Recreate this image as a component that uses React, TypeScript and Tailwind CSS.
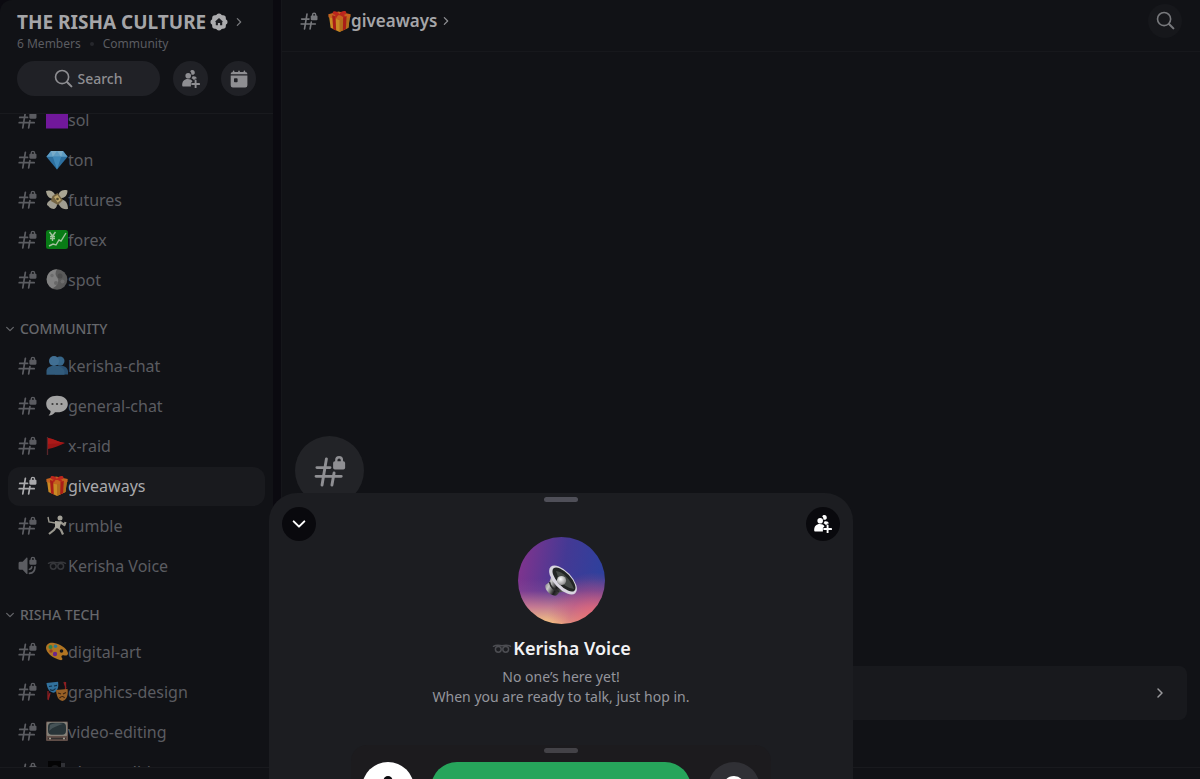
import React from "react";

type IconProps = { className?: string };

function HashLock({ className }: IconProps) {
  return (
    <svg viewBox="0 0 32 33" className={className} fill="none" stroke="currentColor" strokeWidth="3" strokeLinecap="round" aria-hidden="true">
      <path d="M12.300 4 7.800 31M20.200 18.500 18 31M2.500 13h13.500M1.600 22h26" />
      <path d="M22.500 8V5.200a2.900 2.900 0 0 1 5.800 0V8" strokeWidth="2.400" />
      <rect x="19.200" y="6.400" width="12.400" height="8.600" rx="1.800" fill="currentColor" stroke="none" />
    </svg>
  );
}

function SpeakerLock({ className }: IconProps) {
  return (
    <svg viewBox="0 0 32 33" className={className} fill="none" stroke="currentColor" strokeLinecap="round" aria-hidden="true">
      <path d="M16 3.500v27c0 .8-.9 1.200-1.500.7L7.500 24H3A2.500 2.500 0 0 1 .5 21.500v-9A2.500 2.500 0 0 1 3 10h4.500l7-7.200c.6-.5 1.500-.1 1.500.7Z" fill="currentColor" stroke="none" />
      <path d="M19.500 23c2 0 3.500-1.500 3.800-4M19.500 30c5.500-.2 9.300-4.500 9.500-11" strokeWidth="3" />
      <path d="M22.500 8V5.200a2.900 2.900 0 0 1 5.800 0V8" strokeWidth="2.400" />
      <rect x="19.200" y="6.400" width="12.400" height="8.600" rx="1.800" fill="currentColor" stroke="none" />
    </svg>
  );
}

function PeoplePlus({ className }: IconProps) {
  return (
    <svg viewBox="0 0 18 18" className={className} fill="currentColor" aria-hidden="true">
      <circle cx="6.200" cy="5.700" r="2.800" />
      <path d="M0.200 15.500C0 11.300 2.300 9 5.800 9c2 0 3.700.8 4.700 2.200L8.900 13v3.400H1c-.5 0-.8-.4-.8-.9Z" />
      <path d="M8.200 1.400C8.700.5 9.500.1 10.400.1a2.400 2.400 0 0 1 1 4.600c-.7.3-1.500.2-2-.2.1-1.300-.3-2.400-1.200-3.100Z" />
      <path d="M9.500 8.300c.5-.6.800-1.200.9-1.900 2.200-.6 4.100.2 4.400 2.200l-1.600.1-1.100 1.600c-.6-.9-1.500-1.600-2.600-2Z" />
      <path d="M13.600 10.500v7M10.100 14h7" stroke="currentColor" strokeWidth="1.900" strokeLinecap="round" />
    </svg>
  );
}

function CalendarIcon({ className }: IconProps) {
  return (
    <svg viewBox="0 0 18 18" className={className} fill="currentColor" aria-hidden="true">
      <path d="M.7 4.200C.7 2.700 1.700 2 2.800 2V1.200a.8.800 0 0 1 1.600 0V2h3.800V1.200a.8.800 0 0 1 1.600 0V2h3.800V1.200a.8.800 0 0 1 1.600 0V2c1.200 0 2.200.7 2.200 2.200Z" />
      <path fillRule="evenodd" d="M.7 5.600h16.700v9.600a2.200 2.200 0 0 1-2.200 2.200H2.900a2.200 2.200 0 0 1-2.200-2.200ZM4 9v2.500c0 .4.300.7.700.7h2.200c.4 0 .7-.3.700-.7V9c0-.4-.3-.7-.7-.7H4.700c-.4 0-.7.300-.7.700Z" />
    </svg>
  );
}

function SearchIcon({ className }: IconProps) {
  return (
    <svg viewBox="0 0 20 20" className={className} fill="none" stroke="currentColor" strokeLinecap="round" aria-hidden="true">
      <circle cx="8.500" cy="8.500" r="6.900" strokeWidth="1.700" />
      <path d="m13.700 13.700 4.600 4.600" strokeWidth="2.200" />
    </svg>
  );
}

function Chevron({ className }: IconProps) {
  return (
    <svg viewBox="0 0 12 12" className={className} fill="none" stroke="currentColor" strokeWidth="1.500" strokeLinecap="round" strokeLinejoin="round" aria-hidden="true">
      <path d="m4 2 4 4-4 4" />
    </svg>
  );
}

function CommunityBadge({ className }: IconProps) {
  return (
    <svg viewBox="0 0 18 18" className={className} aria-hidden="true">
      <g fill="#acacae">
        <circle cx="9" cy="9" r="7.400" />
        <circle cx="9" cy="3.200" r="2.700" />
        <circle cx="13.100" cy="4.900" r="2.700" />
        <circle cx="14.800" cy="9" r="2.700" />
        <circle cx="13.100" cy="13.100" r="2.700" />
        <circle cx="9" cy="14.800" r="2.700" />
        <circle cx="4.900" cy="13.100" r="2.700" />
        <circle cx="3.200" cy="9" r="2.700" />
        <circle cx="4.900" cy="4.900" r="2.700" />
      </g>
      <path d="m9 4.900 4.100 3.900h-.9v3.500h-2.100V9.900H7.900v2.400H5.800V8.800h-.9Z" fill="#1c1d21" />
    </svg>
  );
}

const emojiArt: Record<string, React.ReactNode> = {
  purple: <rect x="0" y="1.500" width="22" height="18" fill="#71189b" />,
  gem: (
    <>
      <path d="M5 2h12l4.600 5.800L11 20.500.4 7.800Z" fill="#2d6f9f" />
      <path d="M5 2h12l4.600 5.800H.4Z" fill="#5d9cc4" />
      <path d="m6.800 7.800 4.200 12.700 4.200-12.700Z" fill="#3f88b9" />
      <path d="m5 2 1.800 5.800L11 2l4.200 5.800L17 2Z" fill="#78abc9" />
    </>
  ),
  money: (
    <>
      <path d="M0 2c5-2 9 1 10 7C4 11 1 8 0 2ZM12 9c0-6 4-9 9.500-7.500C21.500 7 18 10 12 9Z" fill="#a8a493" />
      <path d="M10 11c-5-1-9 1-9 5 2 1 3 4 7 4 3-1 4-5 2-9ZM12 11c6-2 10 2 10 9-6 1-10-3-10-9Z" fill="#a09d91" />
      <path d="m6.500 7 5-3 5.500 7-5 5-7-4Z" fill="#746442" />
      <path d="m8 8 3.500-2 3.500 5-3.500 2.500Z" fill="#bda66c" />
      <circle cx="11.500" cy="10" r="1.300" fill="#54492d" />
    </>
  ),
  forex: (
    <>
      <rect x="0" y="1" width="22" height="19" rx="2.500" fill="#087b16" />
      <path d="m3.500 3 3 4 3-4M6.500 7v5M4 7.500h5M4 9.500h5M3 17l4-2 3 1 3-5 2 1 5-8" fill="none" stroke="#a4c3a0" strokeWidth="1.400" />
    </>
  ),
  moon: (
    <>
      <circle cx="11" cy="10.500" r="10.300" fill="#5a5a5a" />
      <path d="M11 .2a10.300 10.300 0 0 0-5 19.300c4-1 8-7 5.500-10.500C9 6 9 3 11 .2Z" fill="#818181" />
      <circle cx="14" cy="7" r="2.500" fill="#4c4c4c" />
      <circle cx="10" cy="14" r="2" fill="#686868" />
      <circle cx="16.500" cy="12.500" r="2" fill="#6c6c6c" />
      <circle cx="6" cy="6.500" r="1.700" fill="#6d6d6d" />
    </>
  ),
  people: (
    <>
      <path d="M8 14c0-5 13-5 14 2v3.500H9Z" fill="#2a5173" />
      <circle cx="14" cy="6" r="4.500" fill="#376689" />
      <circle cx="8" cy="6" r="5" fill="#416f93" />
      <path d="M.5 19.800v-4C.5 9 16 9 18.500 16v3.800Z" fill="#315b7c" />
    </>
  ),
  speech: (
    <>
      <path d="M11 .8C4.500.8.2 4 .2 9c0 3.300 1.800 5.700 4.400 6.900.1 2-.8 3.300-2 4.500 3 .2 5-1.200 6.400-3.200 8 .8 12.800-3 12.800-8.200C21.800 4 17.500.8 11 .8Z" fill="#a3a3a3" />
      <g fill="#393939"><circle cx="6.500" cy="9" r="1.100" /><circle cx="11" cy="9" r="1.100" /><circle cx="15.500" cy="9" r="1.100" /></g>
    </>
  ),
  flag: (
    <>
      <path d="M1.500 2v18" stroke="#58252a" strokeWidth="1.300" />
      <path d="M2 3c6 1 10 4 17 5-5 2-11 5-17 6Z" fill="#9b1515" />
      <path d="M2 3c6 1 10 4 17 5L2 9Z" fill="#ab1a19" />
    </>
  ),
  gift: (
    <>
      <path d="m1 6 10 3 10-3-1.500 11-8.500 4-8.500-4Z" fill="#c98a24" />
      <path d="m11 8 10-3-1.500 12-8.500 4Z" fill="#b06c1c" />
      <path d="m.3 4 9.700-2.500 11.700 2.500-.2 3L11 9.500.5 7Z" fill="#c4641f" />
      <path d="m4 5 3.200 1 .6 13.500L5 18.300ZM14.500 7l3.300-1.200-.7 12.400-2.900 1.300Z" fill="#a91d18" />
      <path d="M11 5C8 5 4 4.500 4.500 2.300S9.500 1 11 4c1-3 6-4 6.500-1.700S14 5 11 5Z" fill="#bd261d" />
      <path d="m9 4-2 3M12 4l4 2.500" stroke="#b8261d" strokeWidth="2" />
    </>
  ),
  fencer: (
    <>
      <circle cx="14" cy="3" r="2.500" fill="#a2a097" />
      <path d="m2 2 1 5 6 1 2-1" fill="none" stroke="#99978e" strokeWidth="1.400" />
      <path d="m10 12-2 3-5 4M11 11l4 4 2 4.500M14 7l4.500 3 1-3" fill="none" stroke="#99978e" strokeWidth="2.200" strokeLinejoin="round" />
      <path d="m9 6 6.500.5-2 7L9 13Z" fill="#aaa89f" />
    </>
  ),
  loops: (
    <g fill="none" stroke="currentColor" strokeWidth="1.500" strokeLinecap="round">
      <path d="M2.500 8.300c2-1.200 4.500-1.200 8.500-.6 4-.6 6.500-.6 8.500.6" />
      <circle cx="7.300" cy="11.300" r="2.900" />
      <circle cx="14.700" cy="11.300" r="2.900" />
    </g>
  ),
  palette: (
    <>
      <path d="M8 2C3 1-1 4 .3 8.500 1.500 13 8 17.500 14 19c2.500.6 3-1 1.700-2.500-1-1.500.8-2.500 2.800-2 2.500.5 4-.6 3.300-3C20.500 7 14 3.200 8 2Z" fill="#b17522" />
      <circle cx="4.500" cy="6" r="2" fill="#328348" />
      <circle cx="9.500" cy="5.300" r="1.800" fill="#2e7894" />
      <circle cx="5" cy="10" r="1.700" fill="#963f27" />
      <circle cx="9" cy="13" r="2.200" fill="#6c258b" />
      <circle cx="15.500" cy="10" r="1.800" fill="#15161a" />
    </>
  ),
  masks: (
    <>
      <path d="M2 10v8M19.500 1v8M4 12l-2 7M18 1l2 6" stroke="#8d1e21" strokeWidth="1.300" />
      <path d="M.5 2 12 .7c1 5-.5 10-4.500 11C3 11 1 7 .5 2Z" fill="#31719d" />
      <path d="M3 5.500 6 5M8 5l3-.7M4 8.500c2 1.500 4 1 5.500-1" stroke="#122e46" strokeWidth="1.200" fill="none" />
      <path d="m10 9 11.500-1c1 6-1 11-5 12-4.500-1-6-5-6.500-11Z" fill="#976026" />
      <path d="m12 12 3 1M17 13l3-1.500M13.500 17c2-2 4-2 5 0" stroke="#3b220f" strokeWidth="1.200" fill="none" />
    </>
  ),
  tv: (
    <>
      <rect x="0" y="0.500" width="22" height="19.500" rx="1" fill="#604e48" />
      <rect x=".8" y="1" width="20.400" height="14" rx="1" fill="#858078" />
      <rect x="2" y="1.700" width="18" height="12" rx="4" fill="#283438" />
      <path d="M4 4c3-2 10-2 13-1-4 1-10 3-14 7Z" fill="#465357" />
      <path d="M2 17.500h18" stroke="#33302f" strokeWidth="1.500" />
      <circle cx="4" cy="17.500" r="1" fill="#aaa397" /><circle cx="18" cy="17.500" r="1" fill="#aaa397" />
    </>
  ),
  camera: (
    <>
      <path d="M2 0h13v12H2Z" fill="#040405" />
      <path d="M15 2h4v10h-4Z" fill="#303136" />
      <circle cx="9" cy="8" r="4" fill="#17181b" />
    </>
  ),
};

function Emoji({ name, className }: { name: string; className?: string }) {
  return (
    <svg viewBox="0 0 22 21" className={className} aria-hidden="true">
      {emojiArt[name]}
    </svg>
  );
}

type Channel = { emoji: string; name: string; voice?: boolean; active?: boolean };

function ChannelRow({ emoji, name, voice, active }: Channel) {
  const tone = active ? "bg-[#191a1e] text-[#a9a9ac]" : "text-[#5b5c61]";
  return (
    <li className="px-2 pt-px">
      <a href="#" aria-current={active ? "page" : undefined} className={`flex h-[39px] items-center rounded-xl pb-0.5 pl-2.5 ${tone}`}>
        {voice ? <SpeakerLock className="size-[19px] shrink-0" /> : <HashLock className="size-[19px] shrink-0" />}
        <Emoji name={emoji} className={voice ? "ml-[9px] h-[21px] w-[22px] shrink-0 text-[#36373b]" : "ml-[9px] h-[21px] w-[22px] shrink-0"} />
        <span className="text-base">{name}</span>
      </a>
    </li>
  );
}

function GroupHeading({ children }: { children: React.ReactNode }) {
  return (
    <h2 className="h-[46px] pt-[13px]">
      <button type="button" className="flex h-8 items-center gap-[5px] pl-[5px] text-sm font-medium text-[#66676b]">
        <Chevron className="size-2.5 rotate-90" />
        {children}
      </button>
    </h2>
  );
}

const markets: Channel[] = [
  { emoji: "purple", name: "sol" },
  { emoji: "gem", name: "ton" },
  { emoji: "money", name: "futures" },
  { emoji: "forex", name: "forex" },
  { emoji: "moon", name: "spot" },
];

const community: Channel[] = [
  { emoji: "people", name: "kerisha-chat" },
  { emoji: "speech", name: "general-chat" },
  { emoji: "flag", name: "x-raid" },
  { emoji: "gift", name: "giveaways", active: true },
  { emoji: "fencer", name: "rumble" },
  { emoji: "loops", name: "Kerisha Voice", voice: true },
];

const tech: Channel[] = [
  { emoji: "palette", name: "digital-art" },
  { emoji: "masks", name: "graphics-design" },
  { emoji: "tv", name: "video-editing" },
  { emoji: "camera", name: "photo-editing" },
];

function ChannelList({ items }: { items: Channel[] }) {
  return (
    <ul>
      {items.map((c) => (
        <ChannelRow key={c.name} {...c} />
      ))}
    </ul>
  );
}

function Sidebar() {
  return (
    <aside className="flex w-[273px] shrink-0 flex-col rounded-tl-xl bg-[#111216]">
      <header className="shrink-0 border-b border-[#191a1e] px-[17px] pt-2 pb-[17px]">
        <a href="#" className="flex h-7 items-center gap-1 text-[19px] font-bold text-[#a5a5a8]">
          <h1 className="whitespace-nowrap">THE RISHA CULTURE</h1>
          <CommunityBadge className="size-[18px] shrink-0" />
          <Chevron className="ml-0.5 size-2.5 shrink-0 text-[#77787c]" />
        </a>
        <p className="flex h-4 items-center gap-[9px] text-xs text-[#5b5c61]">
          <span>6 Members</span>
          <span className="size-1 rounded-full bg-[#26272c]" />
          <span>Community</span>
        </p>
        <div className="mt-[9px] flex items-center gap-[13px]">
          <button type="button" className="flex h-[35px] flex-1 items-center justify-center gap-1 rounded-full bg-[#202126] text-sm font-medium text-[#8e8e92]">
            <SearchIcon className="size-[19px]" />
            Search
          </button>
          <button type="button" aria-label="Invite people" className="flex size-[35px] items-center justify-center rounded-full bg-[#202126] text-[#8e8e92]">
            <PeoplePlus className="size-[18px]" />
          </button>
          <button type="button" aria-label="Events" className="flex size-[35px] items-center justify-center rounded-full bg-[#202126] text-[#8e8e92]">
            <CalendarIcon className="size-[18px]" />
          </button>
        </div>
      </header>
      <nav aria-label="Channels" className="min-h-0 flex-1 overflow-hidden">
        <div className="-mt-3.5">
          <ChannelList items={markets} />
          <GroupHeading>COMMUNITY</GroupHeading>
          <ChannelList items={community} />
          <GroupHeading>RISHA TECH</GroupHeading>
          <ChannelList items={tech} />
        </div>
      </nav>
      <div className="h-3 shrink-0 border-t border-[#191a1e]" />
    </aside>
  );
}

function MainPane() {
  return (
    <main className="flex min-w-0 flex-1 flex-col border-l border-[#15161a] bg-[#111216]">
      <header className="flex h-[52px] shrink-0 items-center border-b border-[#17181c] pr-[18px] pb-2.5 pl-[18px] text-[#a5a5a8]">
        <HashLock className="size-[18px] shrink-0 text-[#77787c]" />
        <a href="#" className="ml-2.5 flex items-center text-[17px] font-semibold">
          <Emoji name="gift" className="h-6 w-[23px]" />
          giveaways
          <Chevron className="ml-1 size-2.5 text-[#8e8e92]" />
        </a>
        <button type="button" aria-label="Search" className="ml-auto flex size-[34px] items-center justify-center rounded-full bg-[#16171b] text-[#77787c]">
          <SearchIcon className="size-[19px]" />
        </button>
      </header>
      <section className="flex min-h-0 flex-1 flex-col justify-end pr-[13px] pb-[47px] pl-[13px]">
        <div className="flex size-[69px] items-center justify-center rounded-full bg-[#222327] text-[#8f8f93]">
          <HashLock className="size-8" />
        </div>
        <a href="#" aria-label="Open" className="mt-[161px] flex h-[54px] items-center justify-end rounded-lg bg-[#18191d] pr-[21px] text-[#9a9a9d]">
          <Chevron className="size-3" />
        </a>
      </section>
      <div className="h-3 shrink-0 border-t border-[#191a1e]" />
    </main>
  );
}

function SpeakerEmoji() {
  return (
    <svg viewBox="0 0 34 34" className="size-[34px]" aria-hidden="true">
      <defs>
        <linearGradient id="metal" x1="0" y1="0" x2="1" y2="0.400">
          <stop offset="0" stopColor="#5b5b5b" />
          <stop offset=".3" stopColor="#c9c9c9" />
          <stop offset=".6" stopColor="#1c1c1c" />
          <stop offset="1" stopColor="#777777" />
        </linearGradient>
        <radialGradient id="dome" cx=".4" cy=".35" r=".7">
          <stop offset="0" stopColor="#ffffff" />
          <stop offset="1" stopColor="#858585" />
        </radialGradient>
      </defs>
      <path d="M7 13 5.500 18 1.500 21c-1 3 2 9 8.500 10.500 2 .6 4-.8 5-3l10-1.500Z" fill="url(#metal)" />
      <path d="M5.500 18c1 5 4 8 9.500 9.500" fill="none" stroke="#2b2b2b" strokeWidth="1.500" />
      <ellipse cx="19" cy="16" rx="18" ry="8.800" transform="rotate(47 19 16)" fill="#d8d5df" />
      <ellipse cx="20" cy="15.500" rx="15.300" ry="6.600" transform="rotate(47 20 15.500)" fill="#222524" />
      <path d="M12 7c6 0 15 9 18 18-6-1-11-4-15-9Z" fill="#454a47" />
      <circle cx="17.500" cy="16.500" r="4.600" fill="url(#dome)" />
    </svg>
  );
}

function VoiceSheet() {
  return (
    <section aria-label="Kerisha Voice" className="absolute bottom-0 left-[269px] flex w-[584px] flex-col items-center rounded-t-[28px] bg-[#1c1d21] pt-1">
      <span className="h-[5px] w-[34px] rounded-full bg-[#4f4f58]" />
      <div className="flex w-full items-start justify-between px-[13px] pt-[5px]">
        <button type="button" aria-label="Collapse" className="flex size-[34px] items-center justify-center rounded-full bg-[#09090d] text-white">
          <Chevron className="size-4 rotate-90" />
        </button>
        <div className="mt-[30px] flex size-[87px] items-center justify-center rounded-full bg-[radial-gradient(circle_at_88%_95%,#f0606ecc_0%,#c84f7c80_22%,transparent_42%),linear-gradient(to_top,#f9c982_0%,#dc8993cc_20%,#8a4c9766_38%,transparent_52%),linear-gradient(100deg,#7c348e_8%,#443994_50%,#30409c_85%)]">
          <SpeakerEmoji />
        </div>
        <button type="button" aria-label="Invite people" className="flex size-[34px] items-center justify-center rounded-full bg-[#09090d] text-white">
          <PeoplePlus className="size-[18px]" />
        </button>
      </div>
      <h2 className="mt-2.5 flex h-7 items-center text-lg font-semibold text-[#f2f2f4]">
        <Emoji name="loops" className="h-[21px] w-[22px] text-[#4c4d52]" />
        Kerisha Voice
      </h2>
      <p className="mt-[5px] text-center text-sm leading-5 text-[#94959c]">
        No one’s here yet!
        <br />
        When you are ready to talk, just hop in.
      </p>
      <div className="mt-[38px] flex h-[34px] w-[420px] flex-col items-center overflow-hidden rounded-t-2xl bg-[#1c1b1e] pt-[3px]">
        <span className="h-[5px] w-[34px] shrink-0 rounded-full bg-[#434247]" />
        <div className="mt-[9px] flex w-full shrink-0 gap-[17px] px-[11px]">
          <button type="button" aria-label="Mute" className="flex size-[52px] items-start justify-center rounded-full bg-white pt-3.5">
            <svg viewBox="0 0 24 24" className="size-6" fill="#0b0b0e" aria-hidden="true">
              <rect x="7.500" y="0" width="9" height="15" rx="4.500" />
              <path d="M4 11a8 8 0 0 0 16 0M12 19v4" fill="none" stroke="#0b0b0e" strokeWidth="2" />
            </svg>
          </button>
          <button type="button" aria-label="Join voice" className="h-[52px] flex-1 rounded-full bg-[#26a55b]" />
          <button type="button" aria-label="Chat" className="flex size-[52px] items-start justify-center rounded-full bg-[#303035] pt-3.5">
            <svg viewBox="0 0 24 24" className="size-6" fill="#ffffff" aria-hidden="true">
              <path d="M12 0a11 11 0 1 1 0 22H2.500c-.8 0-1-.8-.5-1.300L4 18.500A11 11 0 0 1 12 0Z" />
            </svg>
          </button>
        </div>
      </div>
    </section>
  );
}

export default function App() {
  return (
    <div className="relative flex h-screen gap-2 overflow-hidden bg-[#0b0a10] font-['Noto_Sans',sans-serif]">
      <Sidebar />
      <MainPane />
      <VoiceSheet />
    </div>
  );
}
